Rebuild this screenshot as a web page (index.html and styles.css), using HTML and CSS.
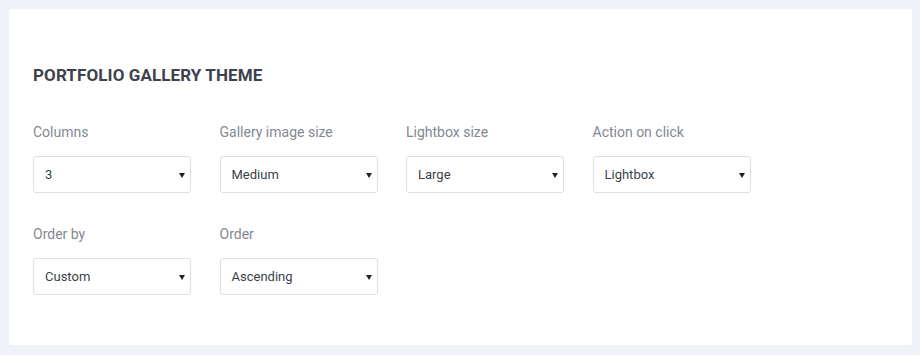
FILE: index.html
```html
<!DOCTYPE html>
<html>
<head>
<meta charset="utf-8">
<link rel="stylesheet" href="styles.css">
</head>
<body>
<div class="card">
  <h2 class="title">PORTFOLIO GALLERY THEME</h2>
  <div class="grid">
    <div class="field">
      <label class="label">Columns</label>
      <div class="select"><span>3</span></div>
    </div>
    <div class="field">
      <label class="label">Gallery image size</label>
      <div class="select"><span>Medium</span></div>
    </div>
    <div class="field">
      <label class="label">Lightbox size</label>
      <div class="select"><span>Large</span></div>
    </div>
    <div class="field">
      <label class="label">Action on click</label>
      <div class="select"><span>Lightbox</span></div>
    </div>
    <div class="field">
      <label class="label">Order by</label>
      <div class="select"><span>Custom</span></div>
    </div>
    <div class="field">
      <label class="label">Order</label>
      <div class="select"><span>Ascending</span></div>
    </div>
  </div>
</div>
</body>
</html>
```

FILE: styles.css
```css
html, body {
  margin: 0;
  padding: 0;
}
body {
  background: #eff2f7;
  padding: 9px 8px 10px 9px;
  font-family: Roboto, "Liberation Sans", sans-serif;
}
.card {
  background: #ffffff;
  border-radius: 3px;
  width: 903px;
  height: 336px;
  box-sizing: border-box;
  padding: 56px 24px 0 24px;
}
.title {
  margin: 0;
  font-size: 17px;
  line-height: 20px;
  font-weight: 700;
  color: #3d424d;
  letter-spacing: 0.1px;
}
.grid {
  margin-top: 37px;
  display: grid;
  grid-template-columns: repeat(4, 158px);
  column-gap: 28.5px;
  row-gap: 31px;
}
.field {
  display: flex;
  flex-direction: column;
}
.label {
  font-size: 14px;
  line-height: 20px;
  color: #838892;
  margin-bottom: 14px;
}
.select {
  position: relative;
  height: 37px;
  box-sizing: border-box;
  border: 1px solid #dcdfe4;
  border-radius: 3px;
  padding-left: 11px;
  display: flex;
  align-items: center;
  font-size: 13px;
  color: #3a3f48;
}
.select::after {
  content: "";
  position: absolute;
  right: 5px;
  top: 16px;
  border-left: 3px solid transparent;
  border-right: 3px solid transparent;
  border-top: 5px solid #222;
}
```
